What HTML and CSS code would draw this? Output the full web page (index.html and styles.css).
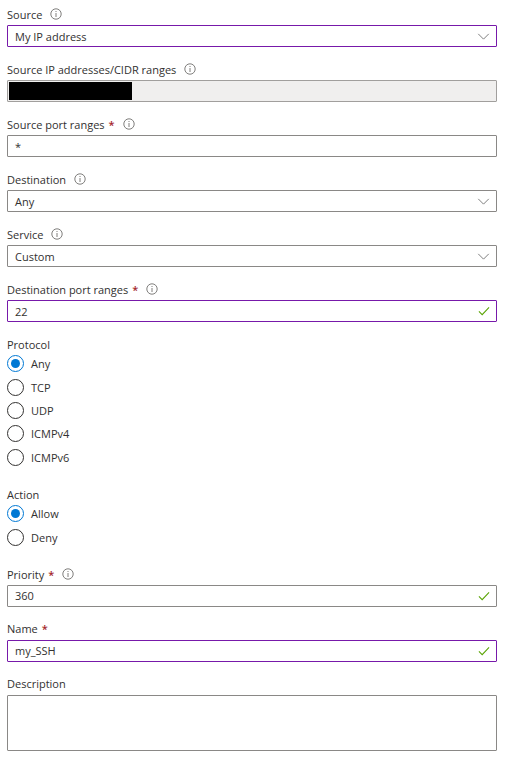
FILE: index.html
```html
<!DOCTYPE html>
<html lang="en">
<head>
<meta charset="utf-8">
<title>Inbound security rule</title>
<link rel="stylesheet" href="styles.css">
</head>
<body>
<svg class="defs" width="0" height="0" aria-hidden="true">
  <symbol id="info" viewBox="0 0 12 12"><circle cx="6" cy="6" r="5.2" fill="none" stroke="#605e5c" stroke-width=".8"/><path d="M6 5v4M6 3v1" fill="none" stroke="#605e5c" stroke-width=".8"/></symbol>
  <symbol id="chev" viewBox="0 0 14 8"><path d="M1 1l6 6 6-6" fill="none" stroke="#7a7a7a" stroke-width="1.1"/></symbol>
  <symbol id="check" viewBox="0 0 13 10"><path d="M1 5.5l3.5 3.5L12 1" fill="none" stroke="#57a300" stroke-width="1.1"/></symbol>
</svg>
<form class="form">
  <div class="field">
    <div class="label"><span>Source</span><svg class="info"><use href="#info"/></svg></div>
    <div class="box active"><span>My IP address</span><svg class="chev"><use href="#chev"/></svg></div>
  </div>
  <div class="field">
    <div class="label"><span>Source IP addresses/CIDR ranges</span><svg class="info"><use href="#info"/></svg></div>
    <div class="box disabled"><span class="redacted"></span></div>
  </div>
  <div class="field">
    <div class="label"><span>Source port ranges</span><span class="req">*</span><svg class="info"><use href="#info"/></svg></div>
    <div class="box"><span>*</span></div>
  </div>
  <div class="field">
    <div class="label"><span>Destination</span><svg class="info"><use href="#info"/></svg></div>
    <div class="box"><span>Any</span><svg class="chev"><use href="#chev"/></svg></div>
  </div>
  <div class="field">
    <div class="label"><span>Service</span><svg class="info"><use href="#info"/></svg></div>
    <div class="box"><span>Custom</span><svg class="chev"><use href="#chev"/></svg></div>
  </div>
  <div class="field">
    <div class="label"><span>Destination port ranges</span><span class="req">*</span><svg class="info"><use href="#info"/></svg></div>
    <div class="box active"><span>22</span><svg class="check"><use href="#check"/></svg></div>
  </div>
  <div class="group">
    <div class="label tight"><span>Protocol</span></div>
    <div class="radios">
      <div class="radio on"><i></i><span>Any</span></div>
      <div class="radio"><i></i><span>TCP</span></div>
      <div class="radio"><i></i><span>UDP</span></div>
      <div class="radio"><i></i><span>ICMPv4</span></div>
      <div class="radio"><i></i><span>ICMPv6</span></div>
    </div>
  </div>
  <div class="group last">
    <div class="label tight"><span>Action</span></div>
    <div class="radios">
      <div class="radio on"><i></i><span>Allow</span></div>
      <div class="radio"><i></i><span>Deny</span></div>
    </div>
  </div>
  <div class="field">
    <div class="label priority"><span>Priority</span><span class="req">*</span><svg class="info"><use href="#info"/></svg></div>
    <div class="box"><span>360</span><svg class="check"><use href="#check"/></svg></div>
  </div>
  <div class="field">
    <div class="label"><span>Name</span><span class="req">*</span></div>
    <div class="box active"><span>my_SSH</span><svg class="check"><use href="#check"/></svg></div>
  </div>
  <div class="field">
    <div class="label"><span>Description</span></div>
    <div class="box area"></div>
  </div>
</form>
</body>
</html>
```
FILE: styles.css
```css
* { box-sizing: border-box; }
html, body { margin: 0; background: #fff; }
body { font-family: "Open Sans", "Noto Sans", sans-serif; font-size: 11px; color: #323130; overflow: hidden; }
.defs { display: block; height: 0; }
.form { padding: 5px 10px 0 7px; }
.field { margin-bottom: 13px; }
.label { height: 20px; padding-bottom: 2px; display: flex; align-items: center; }
.label.tight { height: 19px; padding-bottom: 0; }
.label.priority { padding-bottom: 1px; }
.req { color: #a4262c; margin-left: 4px; font-size: 11px; font-weight: 600; }
.info { width: 12px; height: 12px; margin-left: 8px; }
.box { height: 22px; border: 1px solid #8a8886; border-radius: 1px; padding: 0 7px; display: flex; align-items: center; justify-content: space-between; }
.box.active { border-color: #7719aa; }
.box.disabled { background: #f0efee; border-color: #a19f9d; padding: 0 0 0 1px; }
.redacted { width: 123px; height: 18px; background: #000; }
.box.area { height: 56px; }
.chev { width: 13px; height: 7px; margin-right: -1px; }
.check { width: 12px; height: 10px; margin-right: -1px; }
.group { margin-bottom: 19px; }
.group.last { margin-bottom: 18.5px; }
.radios { display: flex; flex-direction: column; gap: 5.5px; }
.radio { display: flex; align-items: center; height: 18px; gap: 7px; }
.radio:nth-child(2) { margin-top: .5px; }
.radio:nth-child(3) { margin-top: -.5px; }
.radio i { width: 17px; height: 17px; border: 1px solid #323130; border-radius: 50%; display: flex; align-items: center; justify-content: center; }
.radio.on i { border-color: #0078d4; }
.radio.on i::after { content: ""; width: 9px; height: 9px; border-radius: 50%; background: #0078d4; }
```
